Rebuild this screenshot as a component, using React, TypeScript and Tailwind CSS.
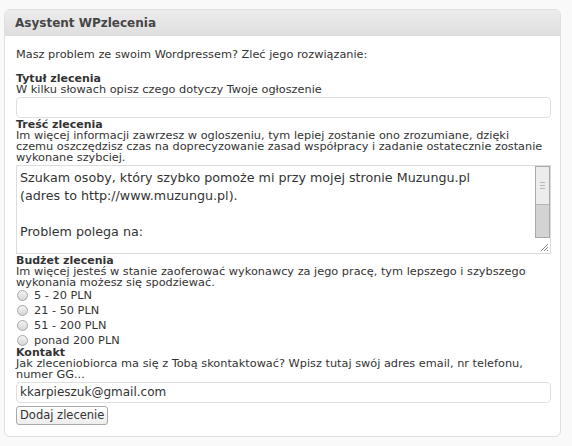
import React from "react";

const font = { fontFamily: '"DejaVu Sans", Verdana, sans-serif' };

function Radio({ label }: { label: string }) {
  return (
    <label className="flex items-center h-[15px] gap-[6px]">
      <span className="w-[11px] h-[11px] rounded-full border border-[#a8a8a8] bg-gradient-to-b from-[#f4f4f4] to-[#d6d6d6] ml-[1px]" />
      <span>{label}</span>
    </label>
  );
}

export default function App() {
  return (
    <div className="w-[572px] h-[446px] bg-[#f9f9f9] pt-[9px] pl-[4px] text-[#333]" style={font}>
      <div className="w-[557px] rounded-[6px] border border-[#dfdfdf] bg-white overflow-hidden">
        <div className="h-[26px] bg-gradient-to-b from-[#ececec] to-[#dfdfdf] border-b border-[#dcdcdc] pl-[10px] flex items-center">
          <h3 className="text-[12px] font-bold text-[#464646]">Asystent WPzlecenia</h3>
        </div>

        <div className="pl-[11px] pr-[9px] pt-[13px] pb-[11px] text-[11.3px] leading-[11px]">
          <p>Masz problem ze swoim Wordpressem? Zleć jego rozwiązanie:</p>

          <div className="mt-[13px] font-bold text-[11px]">Tytuł zlecenia</div>
          <div>W kilku słowach opisz czego dotyczy Twoje ogłoszenie</div>
          <div className="mt-[2px] h-[21px] border border-[#dfdfdf] rounded-[4px]" />

          <div className="mt-[1px] font-bold text-[11px]">Treść zlecenia</div>
          <div>
            Im więcej informacji zawrzesz w ogloszeniu, tym lepiej zostanie ono zrozumiane, dzięki
            <br />
            czemu oszczędzisz czas na doprecyzowanie zasad współpracy i zadanie ostatecznie zostanie
            <br />
            wykonane szybciej.
          </div>
          <div className="mt-[2px] h-[89px] border border-[#dcdcdc] flex">
            <div className="flex-1 pl-[3px] pt-[3px] text-[12.7px] leading-[18px] overflow-hidden">
              <div>Szukam osoby, który szybko pomoże mi przy mojej stronie Muzungu.pl</div>
              <div>(adres to http://www.muzungu.pl).</div>
              <div>&nbsp;</div>
              <div>Problem polega na:</div>
            </div>
            <div className="w-[15px] flex flex-col">
              <div className="h-[72px] border border-[#a9a9a9] flex flex-col">
                <div className="h-[37px] bg-[#ececec] flex flex-col items-center justify-center gap-[2px]">
                  <span className="w-[5px] h-px bg-[#b8b8b8]" />
                  <span className="w-[5px] h-px bg-[#b8b8b8]" />
                  <span className="w-[5px] h-px bg-[#b8b8b8]" />
                </div>
                <div className="flex-1 bg-[#d3d3d3] border-t border-[#b5b5b5]" />
              </div>
              <div className="flex-1 relative">
                <svg className="absolute right-[1px] bottom-[1px]" width="9" height="9" viewBox="0 0 9 9">
                  <path d="M1 8 L8 1 M4 8 L8 4 M7 8 L8 7" stroke="#8a8a8a" strokeWidth="1" />
                </svg>
              </div>
            </div>
          </div>

          <div className="mt-[1px] font-bold text-[11px]">Budżet zlecenia</div>
          <div>
            Im więcej jesteś w stanie zaoferować wykonawcy za jego pracę, tym lepszego i szybszego
            <br />
            wykonania możesz się spodziewać.
          </div>
          <div>
            <Radio label="5 - 20 PLN" />
            <Radio label="21 - 50 PLN" />
            <Radio label="51 - 200 PLN" />
            <Radio label="ponad 200 PLN" />
          </div>

          <div className="mt-[-1px] font-bold text-[11px]">Kontakt</div>
          <div>
            Jak zleceniobiorca ma się z Tobą skontaktować? Wpisz tutaj swój adres email, nr telefonu,
            <br />
            numer GG...
          </div>
          <div className="mt-[2px] h-[21px] border border-[#dfdfdf] rounded-[4px] flex items-center pl-[3px] text-[12px]">
            kkarpieszuk@gmail.com
          </div>
          <button className="mt-[3px] h-[19px] px-[3px] border border-[#a9a9a9] rounded-[3px] bg-gradient-to-b from-white to-[#ededed] text-[11.5px] leading-[15px] text-[#333]" style={font}>
            Dodaj zlecenie
          </button>
        </div>
      </div>
    </div>
  );
}
